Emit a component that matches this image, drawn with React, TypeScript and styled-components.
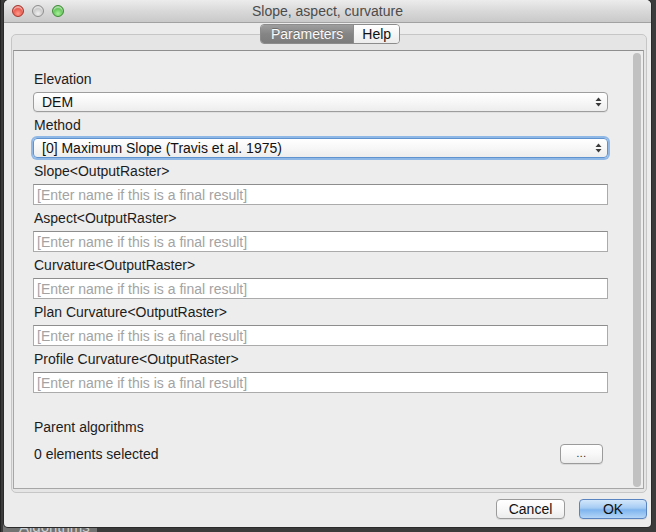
import React from "react";
import styled, { createGlobalStyle } from "styled-components";

const font = `"Liberation Sans", "DejaVu Sans", Arial, sans-serif`;

const GlobalStyle = createGlobalStyle`
  html, body {
    margin: 0;
    padding: 0;
    background: #363636;
  }
  body {
    font-family: ${font};
    font-size: 14px;
    color: #1c1c1c;
  }
`;

const Desktop = styled.div`
  position: relative;
  width: 656px;
  height: 532px;
  overflow: hidden;
  background: #3b3b3b;
  border-left: 1px solid #222;
  box-sizing: border-box;
`;

// a panel of the main app, showing below the dialog
const BehindTab = styled.div`
  position: absolute;
  left: 2px;
  top: 517px;
  width: 94px;
  height: 20px;
  background: #727272;
  color: #cfcfcf;
  font-size: 15px;
  line-height: 20px;
  padding-left: 16px;
  box-sizing: border-box;
`;

const Window = styled.div`
  position: relative;
  z-index: 1;
  margin-left: 3px;
  width: 647px;
  height: 527px;
  background: #ececec;
  border-radius: 5px 5px 4px 4px;
  box-shadow: 0 0 0 1px #2a2a2a;
  display: flex;
  flex-direction: column;
  overflow: hidden;
`;

const TitleBar = styled.div`
  position: relative;
  height: 22px;
  flex: 0 0 22px;
  display: flex;
  align-items: center;
  justify-content: center;
  background: linear-gradient(#ececec, #d9d9d9 50%, #c9c9c9);
  border-bottom: 1px solid #a2a2a2;
  color: #4b4b4b;
  font-size: 14px;
`;

const Lights = styled.div`
  position: absolute;
  left: 8px;
  top: 5px;
  display: flex;
  gap: 8px;
`;

const Light = styled.span<{ $c1: string; $c2: string; $edge: string }>`
  width: 12px;
  height: 12px;
  border-radius: 50%;
  box-sizing: border-box;
  border: 1px solid ${(p) => p.$edge};
  background: radial-gradient(circle at 50% 75%, ${(p) => p.$c1} 0%, ${(p) => p.$c2} 70%);
  box-shadow: inset 0 2px 1px rgba(255, 255, 255, 0.55);
`;

const Body = styled.div`
  flex: 1;
  display: flex;
  flex-direction: column;
  padding: 1px 4px 8px 7px;
`;

const TabBar = styled.div`
  position: relative;
  z-index: 2;
  display: flex;
  justify-content: center;
  height: 20px;
  padding-left: 2px;
`;

const Segments = styled.div`
  display: flex;
  border: 1px solid #8c8c8c;
  border-radius: 4px;
  overflow: hidden;
  box-sizing: border-box;
  height: 20px;
`;

const Tab = styled.div<{ $active?: boolean }>`
  height: 18px;
  line-height: 18px;
  padding: 0 ${(p) => (p.$active ? "10px" : "8px")};
  font-size: 14px;
  color: ${(p) => (p.$active ? "#fafafa" : "#111")};
  background: ${(p) =>
    p.$active
      ? "linear-gradient(#9e9e9e, #858585 50%, #7c7c7c)"
      : "linear-gradient(#ffffff, #f6f6f6 50%, #ececec)"};
  text-shadow: ${(p) => (p.$active ? "0 -1px 0 rgba(0,0,0,0.25)" : "none")};
  & + & {
    border-left: 1px solid #8c8c8c;
  }
`;

const TabFrame = styled.div`
  margin-top: -10px;
  height: 459px;
  box-sizing: border-box;
  border: 1px solid #c6c6c6;
  border-radius: 5px;
  background: #e5e5e5;
  padding: 15px 2px 3px 1px;
`;

const ScrollPanel = styled.div`
  height: 439px;
  box-sizing: border-box;
  border: 1px solid #a6a6a6;
  border-top-color: #8f8f8f;
  background: #ededed;
  display: flex;
`;

const Form = styled.div`
  width: 575px;
  padding: 20px 0 0 19px;
  display: flex;
  flex-direction: column;
  gap: 5px;
`;

const Field = styled.div`
  display: flex;
  flex-direction: column;
`;

const Label = styled.div`
  height: 17px;
  line-height: 17px;
  margin-bottom: 4px;
  padding-left: 1px;
  font-size: 14px;
  color: #1c1c1c;
`;

const Combo = styled.div<{ $focus?: boolean }>`
  position: relative;
  height: 20px;
  box-sizing: border-box;
  border: 1px solid ${(p) => (p.$focus ? "#5f93cf" : "#9d9d9d")};
  border-radius: 4px;
  background: linear-gradient(#ffffff, #f7f7f7 50%, #ededed);
  box-shadow: ${(p) =>
    p.$focus ? "0 0 0 2px #8fb8e6" : "0 1px 0 rgba(0,0,0,0.05)"};
  display: flex;
  align-items: center;
  padding-left: 8px;
  font-size: 14px;
  color: #111;
`;

const ComboText = styled.span`
  flex: 1;
`;

const Arrows = styled.svg`
  width: 7px;
  height: 10px;
  margin-right: 5px;
`;

const TextInput = styled.input`
  height: 21px;
  box-sizing: border-box;
  border: 1px solid #ababab;
  border-top-color: #8d8d8d;
  background: #fff;
  padding: 0 3px;
  font-family: ${font};
  font-size: 14px;
  outline: none;
  &::placeholder {
    color: #a3a3a3;
  }
`;

const ParentLabel = styled(Label)`
  margin-top: 21px;
  margin-bottom: 8px;
`;

const SelectedRow = styled.div`
  display: flex;
  align-items: center;
  justify-content: space-between;
  padding-right: 5px;
  padding-left: 1px;
  height: 20px;
`;

const SelectedText = styled.span`
  font-size: 14px;
  color: #1c1c1c;
`;

const PushButton = styled.button<{ $w: number; $default?: boolean }>`
  width: ${(p) => p.$w}px;
  height: 20px;
  padding: 0;
  box-sizing: border-box;
  border-radius: 4px;
  font-family: ${font};
  font-size: 14px;
  color: #111;
  border: 1px solid ${(p) => (p.$default ? "#5a84bf" : "#9b9b9b")};
  background: ${(p) =>
    p.$default
      ? "linear-gradient(#d3e7fb, #a4cbf3 45%, #7fb4ee 55%, #b3d5f7)"
      : "linear-gradient(#ffffff, #f8f8f8 50%, #ececec)"};
  box-shadow: 0 1px 0 rgba(0, 0, 0, 0.08);
`;

const Dots = styled.span`
  font-size: 10px;
  letter-spacing: 0.5px;
  position: relative;
  top: -2px;
`;

const Scrollbar = styled.div`
  margin-left: auto;
  margin-right: 2px;
  padding-top: 2px;
  padding-bottom: 1px;
  width: 8px;
  display: flex;
`;

const Thumb = styled.div`
  flex: 1;
  border-radius: 4px;
  background: #c1c1c1;
`;

const ButtonBar = styled.div`
  margin-top: 6px;
  display: flex;
  justify-content: flex-end;
  gap: 14px;
`;

const UpDown = () => (
  <Arrows viewBox="0 0 7 10">
    <path d="M3.5 0.5 L6.5 4 L0.5 4 Z" fill="#3a3a3a" />
    <path d="M3.5 9.5 L6.5 6 L0.5 6 Z" fill="#3a3a3a" />
  </Arrows>
);

const outputs = [
  "Slope<OutputRaster>",
  "Aspect<OutputRaster>",
  "Curvature<OutputRaster>",
  "Plan Curvature<OutputRaster>",
  "Profile Curvature<OutputRaster>",
];

export default function App() {
  return (
    <>
      <GlobalStyle />
      <Desktop>
        <BehindTab>Algorithms</BehindTab>
        <Window>
          <TitleBar>
            <Lights>
              <Light $c1="#ff9a8a" $c2="#e0443a" $edge="#a5342c" />
              <Light $c1="#f0f0f0" $c2="#bdbdbd" $edge="#8e8e8e" />
              <Light $c1="#a8f09a" $c2="#4fb845" $edge="#3f8a35" />
            </Lights>
            Slope, aspect, curvature
          </TitleBar>
          <Body>
            <TabBar>
              <Segments>
                <Tab $active>Parameters</Tab>
                <Tab>Help</Tab>
              </Segments>
            </TabBar>
            <TabFrame>
              <ScrollPanel>
                <Form>
                  <Field>
                    <Label>Elevation</Label>
                    <Combo>
                      <ComboText>DEM</ComboText>
                      <UpDown />
                    </Combo>
                  </Field>
                  <Field>
                    <Label>Method</Label>
                    <Combo $focus>
                      <ComboText>[0] Maximum Slope (Travis et al. 1975)</ComboText>
                      <UpDown />
                    </Combo>
                  </Field>
                  {outputs.map((o) => (
                    <Field key={o}>
                      <Label>{o}</Label>
                      <TextInput placeholder="[Enter name if this is a final result]" />
                    </Field>
                  ))}
                  <Field>
                    <ParentLabel>Parent algorithms</ParentLabel>
                    <SelectedRow>
                      <SelectedText>0 elements selected</SelectedText>
                      <PushButton $w={43}>
                        <Dots>...</Dots>
                      </PushButton>
                    </SelectedRow>
                  </Field>
                </Form>
                <Scrollbar>
                  <Thumb />
                </Scrollbar>
              </ScrollPanel>
            </TabFrame>
            <ButtonBar>
              <PushButton $w={69}>Cancel</PushButton>
              <PushButton $w={68} $default>
                OK
              </PushButton>
            </ButtonBar>
          </Body>
        </Window>
      </Desktop>
    </>
  );
}
